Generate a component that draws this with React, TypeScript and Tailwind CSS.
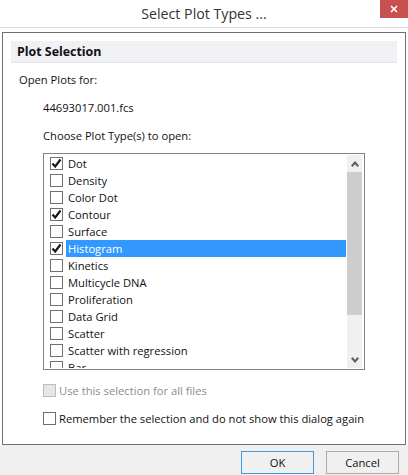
import { X } from 'lucide-react';

const PLOTS = [
  { name: 'Dot', checked: true },
  { name: 'Density' },
  { name: 'Color Dot' },
  { name: 'Contour', checked: true },
  { name: 'Surface' },
  { name: 'Histogram', checked: true, selected: true },
  { name: 'Kinetics' },
  { name: 'Multicycle DNA' },
  { name: 'Proliferation' },
  { name: 'Data Grid' },
  { name: 'Scatter' },
  { name: 'Scatter with regression' },
  { name: 'Bar' },
];

const Box = ({ checked }: { checked?: boolean }) => (
  <span className="w-[13px] h-[13px] shrink-0 border border-[#707070] bg-white flex items-center justify-center">
    {checked && (
      <svg width="11" height="11" viewBox="0 0 11 11">
        <path d="M1.5 5.5L4.2 8.5L9.5 1.5" fill="none" stroke="#1a1a1a" strokeWidth="2.2" />
      </svg>
    )}
  </span>
);

const Chevron = ({ up }: { up?: boolean }) => (
  <svg width="8" height="6" viewBox="0 0 8 6">
    <path d={up ? 'M0.8 5.2L4 1.6L7.2 5.2' : 'M0.8 0.8L4 4.4L7.2 0.8'} fill="none" stroke="#606060" strokeWidth="2.2" />
  </svg>
);

export default function App() {
  return (
    <div className="relative w-[408px] h-[475px] overflow-hidden bg-white text-[11.2px] leading-[17px] text-[#111] font-['Open_Sans','Noto_Sans',sans-serif]">
      {/* Title bar */}
      <div className="h-[28px] border-b border-[#d9d9d9] flex items-center justify-center text-[14.2px] text-[#333]">
        Select Plot Types ...
      </div>
      <div className="absolute top-0 right-0 w-[28px] h-[18px] bg-[#c75050] flex items-center justify-center">
        <X className="w-[10px] h-[10px] text-white" strokeWidth={4} />
      </div>

      <div className="px-[2px] pt-[4px] h-[417px]">
        <div className="w-[404px] h-[413px] border border-[#707070] pt-[8px] px-[8px]">
          <div className="h-[22px] w-[386px] bg-[#f0f0f5] border-b border-[#e2e3e8] pl-[6px] flex items-center font-bold text-[12.4px]">
            Plot Selection
          </div>

          <p className="mt-[8px] ml-[8px]">Open Plots for:</p>
          <p className="mt-[11px] ml-[32px]">44693017.001.fcs</p>
          <p className="mt-[11px] ml-[32px]">Choose Plot Type(s) to open:</p>

          <div className="mt-[9px] ml-[32px] w-[322px] h-[217px] border border-[#82828c] flex p-[1px] overflow-hidden">
            <div className="flex-1 min-w-0 overflow-hidden">
              {PLOTS.map(p => (
                <div key={p.name} className="h-[17px] flex items-center pl-[5px]">
                  <Box checked={p.checked} />
                  <span className={`ml-[3px] pl-[2px] flex-1 h-[17px] whitespace-nowrap ${p.selected ? 'bg-[#3399ff] text-white' : ''}`}>
                    {p.name}
                  </span>
                </div>
              ))}
            </div>
            <div className="w-[15px] mx-[1px] bg-[#f0f0f0] flex flex-col">
              <div className="h-[17px] flex items-center justify-center"><Chevron up /></div>
              <div className="h-[143px] bg-[#cdcdcd]" />
              <div className="flex-1" />
              <div className="h-[17px] flex items-center justify-center"><Chevron /></div>
            </div>
          </div>

          <label className="mt-[12px] ml-[32px] h-[17px] flex items-center gap-[3px] text-[#8c8c8c]">
            <span className="w-[13px] h-[13px] border border-[#bcbcbc] bg-[#e6e6e6]" />
            Use this selection for all files
          </label>
          <label className="mt-[11px] ml-[32px] h-[17px] flex items-center gap-[3px]">
            <Box />
            Remember the selection and do not show this dialog again
          </label>
        </div>
      </div>

      {/* Footer */}
      <div className="h-[30px] bg-[#f0f0f0] flex justify-end gap-[12px] pr-[9px] pt-[6px]">
        <button className="w-[73px] h-[23px] bg-[#f0f0f0] border border-[#3c9be8]">OK</button>
        <button className="w-[73px] h-[23px] bg-[#f0f0f0] border border-[#acacac]">Cancel</button>
      </div>
    </div>
  );
}
